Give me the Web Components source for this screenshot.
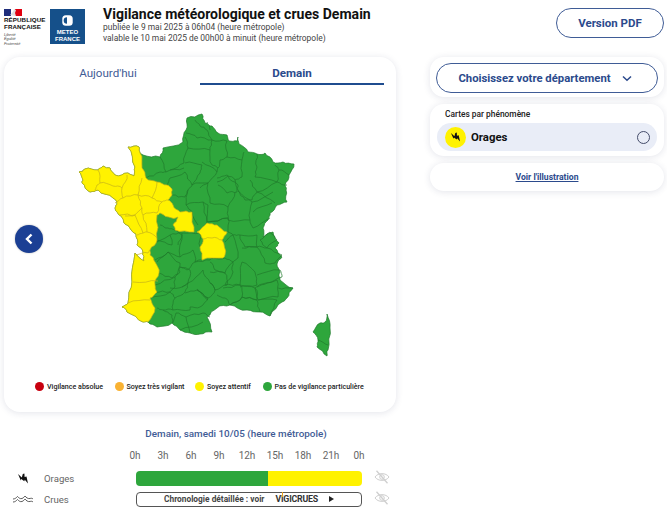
<!DOCTYPE html>
<html lang="fr">
<head>
<meta charset="utf-8">
<title>Vigilance</title>
<style>
  html, body { margin: 0; background: #fff; font-family: Roboto, "Liberation Sans", sans-serif; }
  body { width: 667px; height: 520px; overflow: hidden; }
</style>
</head>
<body>
<mf-page></mf-page>
<script>
const BLUE = '#2b4a8c';

// toutes les coordonnees sont en pixels de page, le viewBox du svg suit la page
const FRANCE = '202,114 205,123 212,126 218,133 227,135 229,141 237,141 238,137 239,144 248,152 257,154 265,153 273,162 283,162 294,164 289,175 285,185 286,190 287,202 277,205 270,213 268,220 263,228 263,237 273,232 275,238 279,243 275,248 282,257 277,264 280,272 280,280 293,288 287,298 282,302 270,316 260,312 247,310 230,305 217,308 207,317 212,332 200,334 190,333 180,330 172,323 157,327 148,322 143,322 127,312 122,307 128,303 132,282 135,253 144,261 143,252 137,245 136,234 125,224 121,216 115,208 117,203 113,198 98,190 90,192 82,183 83,180 79,172 85,169 98,170 103,166 110,168 115,175 128,173 134,176 135,167 128,147 139,147 140,153 143,155 160,157 163,148 183,142 186,130 187,118';
const CORSE = '327,314 330,328 328,350 327,356 317,347 318,340 313,332 320,323 325,322';
const YELLOW_WEST = '128,147 139,147 140,153 142,168 146,178 157,182 167,185 172,189 172,195 168,200 173,205 180,212 192,212 194,232 175,230 173,225 178,217 172,218 160,213 157,215 157,240 150,250 150,255 155,262 159,273 155,285 157,292 150,298 155,308 148,322 143,322 127,312 122,307 128,303 132,282 135,253 144,261 143,252 137,245 136,234 125,224 121,216 115,208 117,203 113,198 98,190 90,192 82,183 83,180 79,172 85,169 98,170 103,166 110,168 115,175 128,173 134,176 135,167';
const YELLOW_CENTER = '197,232 207,223 217,225 227,232 222,240 225,255 223,258 202,260 200,247 203,239';

const GREEN_LINES = [
  '195,120 200,126 207,130 212,140', '207,122 210,130', '186,133 197,138 212,140 227,141',
  '185,137 188,148 210,150 212,140', '210,150 212,165 218,168', '227,141 227,157 242,160 244,152',
  '227,157 220,160 217,172', '242,160 242,177 235,180 227,175 217,178', '257,154 257,167 255,177 277,182 279,170 275,165',
  '277,182 287,185', '279,170 289,175', '250,180 257,192 275,203', '257,192 277,182', '235,180 238,190 245,200 252,200 257,192',
  '217,182 228,176 238,185 237,192 227,193 218,185', '208,183 210,203 228,207 235,192', '228,207 228,220 250,220 252,202 238,191',
  '252,202 273,192', '250,220 253,228 270,218', '253,212 272,203', '208,205 207,222 228,218',
  '185,163 202,165 200,173 192,185 185,172', '202,162 217,172 208,183 200,188', '188,148 184,163 170,170', '160,157 166,172 184,168',
  '146,178 160,172 166,172', '167,185 170,178 185,172', '172,195 185,197 188,190 192,185 208,183', '188,190 186,205 203,202 208,205',
  '186,205 192,212', '203,202 207,222 200,230', '207,222 228,218 228,232', '192,212 198,225',
  '150,248 170,235 182,233 200,233 200,247', '182,233 180,257 168,252 155,260', '157,240 172,245 170,235', '175,230 182,235 178,245',
  '168,252 157,262', '168,252 180,263 180,272 172,278 159,273', '180,257 193,250 195,262 187,270 180,267', '195,262 210,260 213,258',
  '202,260 195,262', '213,258 225,258 233,262 225,273 215,270 210,262', '225,242 233,235 238,258 233,262', '240,235 257,235 257,247 245,247 240,235',
  '228,232 233,235 240,235', '260,240 270,232 277,240 267,248 260,240', '257,247 267,248 282,255 275,263 265,263 257,247',
  '242,248 257,247', '242,262 240,285 225,285 233,272 233,262', '242,262 255,272 257,285 240,285', '257,275 280,270 282,277 267,283 257,287',
  '255,288 277,280 278,297 258,300 255,288', '278,288 293,288', '258,300 277,300 270,316', '230,305 242,297 257,300 260,312',
  '240,287 255,288 257,300 242,297', '223,288 240,285 242,297 230,305 225,298 217,295', '210,272 225,273 227,285 215,290 210,283',
  '188,283 203,270 210,283 215,290 208,298 197,290', '175,277 180,267 190,270 188,283 182,287', '170,288 182,287 188,283 185,292 175,298',
  '155,285 175,277 175,287 170,292 155,292', '150,298 170,292 175,298 173,310 163,310 157,308', '163,310 172,315 173,323',
  '185,293 197,290 208,298 200,307 190,307', '173,310 190,310 190,307', '172,323 176,313 186,317 190,333', '186,317 203,313 210,317',
  '180,330 203,322', '197,289 208,300', '160,225 168,228 175,230', '318,340 328,345'
];
const YELLOW_LINES = [
  '98,170 100,183 97,185 95,190', '100,183 113,186 122,188', '127,175 122,188 123,198 115,203', '142,178 138,195 123,198',
  '157,182 152,198 138,195', '152,198 162,202 157,213 143,215', '138,195 142,208 135,215 120,215', '142,208 143,215 147,232 157,238',
  '125,216 135,215 143,233 137,235', '143,233 147,232', '162,202 168,200', '136,255 148,253 150,250', '133,282 158,281', '128,303 150,300',
  '203,239 212,238 222,240'
];

// les frontieres sont irregulieres : on casse chaque segment, toujours de la meme facon
// pour que deux departements voisins gardent la meme frontiere
function wiggle(points, closed) {
  const pts = points.trim().split(/\s+/).map(p => p.split(',').map(Number));
  if (closed) pts.push(pts[0]);
  const split = (a, b, depth) => {
    if (depth === 0) return [];
    const flip = a[0] > b[0] || (a[0] === b[0] && a[1] > b[1]);
    const p = flip ? b : a, q = flip ? a : b;
    const dx = q[0] - p[0], dy = q[1] - p[1];
    const len = Math.hypot(dx, dy) || 1;
    const n = Math.sin(p[0] * 12.9 + p[1] * 78.2 + q[0] * 37.7 + q[1] * 11.1) * 43758;
    // jamais plus de 1px a cote du trace d'origine
    const off = Math.max(-1, Math.min(1, (n - Math.floor(n) - .5) * .32 * len));
    const m = [(a[0] + b[0]) / 2 - dy / len * off, (a[1] + b[1]) / 2 + dx / len * off];
    return [...split(a, m, depth - 1), m, ...split(m, b, depth - 1)];
  };
  let out = [pts[0]];
  for (let i = 1; i < pts.length; i++) {
    out = out.concat(split(pts[i - 1], pts[i], 2), [pts[i]]);
  }
  return out.map(p => p[0].toFixed(1) + ',' + p[1].toFixed(1)).join(' ');
}

const BOLT = 'M1 1 4.800 4.600 5.800 1 7.400 .5 7.600 4 9.500 3.500 11 10.500 7.800 6.800 7.300 8.300 4.300 6 3.800 7.500z';

class MfLogos extends HTMLElement {
  constructor() {
    super();
    this.attachShadow({mode: 'open'}).innerHTML = `
    <style>
      :host { display: flex; gap: 6px; align-items: flex-start; width: 85px; }
      .rf { width: 40px; font-family: "Liberation Sans", sans-serif; }
      .rf svg { display: block; }
      .name { font-size: 6.2px; line-height: 7.4px; font-weight: bold; color: #111; margin-top: 0; letter-spacing: .1px; white-space: nowrap; }
      .motto { font-size: 3.8px; line-height: 4.500px; font-style: italic; color: #444; margin-top: 2px; }
      .mf { width: 35px; height: 35px; background: #15508a; color: #fff; display: flex; flex-direction: column; align-items: center; font-family: "Liberation Sans", sans-serif; font-size: 6px; line-height: 7px; font-weight: bold; }
      .mf svg { display: block; margin: 6px 0 3px; }
    </style>
    <div class="rf">
      <svg width="18" height="7" viewBox="0 0 18 7"><rect width="7" height="7" fill="#1f2d7b"/><rect x="7" width="4" height="7" fill="#fff"/><rect x="11" width="7" height="7" fill="#e1000f"/><path d="M6 6l3-3 1-3 2 1-1 3 1 3z" fill="#ddd"/></svg>
      <div class="name">RÉPUBLIQUE<br>FRANÇAISE</div>
      <div class="motto">Liberté<br>Égalité<br>Fraternité</div>
    </div>
    <div class="mf">
      <svg width="11" height="11" viewBox="0 0 11 11"><rect x=".3" y=".3" width="10.400" height="10.400" rx="3.500" fill="#fff"/><path d="M5 2.200a3.300 3.300 0 0 0 0 6.600z" fill="#15508a"/></svg>
      <span>METEO</span><span>FRANCE</span>
    </div>`;
  }
}

class MfHeader extends HTMLElement {
  constructor() {
    super();
    this.attachShadow({mode: 'open'}).innerHTML = `
    <style>
      :host { display: flex; height: 57px; box-sizing: border-box; padding: 9px 3px 0 4px; }
      .txt { margin: -2px 0 0 14px; flex: 1; }
      h1 { margin: 0; font-size: 14.05px; line-height: 14px; font-weight: 700; color: #111; white-space: nowrap; }
      p { margin: 0; font-size: 8.45px; line-height: 11px; color: #444; white-space: nowrap; }
      h1 + p { margin-top: 1px; }
      a { box-sizing: border-box; width: 108px; height: 30px; margin-top: -1px; border: 1px solid #3f5c96; border-radius: 15px; display: flex; align-items: center; justify-content: center; font-size: 11.5px; font-weight: 700; color: ${BLUE}; }
    </style>
    <mf-logos></mf-logos>
    <div class="txt">
      <h1>Vigilance météorologique et crues Demain</h1>
      <p>publiée le 9 mai 2025 à 06h04 (heure métropole)</p>
      <p>valable le 10 mai 2025 de 00h00 à minuit (heure métropole)</p>
    </div>
    <a>Version PDF</a>`;
  }
}

class MfTabs extends HTMLElement {
  constructor() {
    super();
    this.attachShadow({mode: 'open'}).innerHTML = `
    <style>
      :host { display: flex; height: 33px; box-sizing: border-box; padding: 0 12px; font-size: 11.6px; color: #3f5c96; }
      div { flex: 1; text-align: center; padding-top: 9px; height: 24px; }
      div + div { font-weight: 700; color: ${BLUE}; border-bottom: 2px solid #1f4c8f; height: 17px; }
    </style>
    <div>Aujourd'hui</div><div>Demain</div>`;
  }
}

class MfMap extends HTMLElement {
  constructor() {
    super();
    const lines = (list, color) => list.map(p => `<polyline points="${wiggle(p)}" fill="none" stroke="${color}"/>`).join('');
    const area = (p, fill, stroke) => `<polygon points="${wiggle(p, true)}" fill="${fill}" stroke="${stroke}"/>`;
    this.attachShadow({mode: 'open'}).innerHTML = `
    <style>
      :host { display: block; position: relative; height: 288px; }
      svg.map { display: block; }
      .prev { position: absolute; left: 11px; top: 135px; width: 28px; height: 28px; border-radius: 50%; background: #1b3f94; display: flex; align-items: center; justify-content: center; box-shadow: 0 0 2px rgba(0,0,0,.3); }
    </style>
    <svg class="map" width="392" height="288" viewBox="4 90 392 288">
      <g stroke-width=".7" stroke-linejoin="round">
        ${area(FRANCE, '#2ea63c', '#1f7a2b')}
        ${area(CORSE, '#2ea63c', '#1f7a2b')}
        ${lines(GREEN_LINES, '#1f7a2b')}
        ${area(YELLOW_WEST, '#fff200', '#c4b21a')}
        ${area(YELLOW_CENTER, '#fff200', '#c4b21a')}
        ${lines(YELLOW_LINES, '#c4b21a')}
      </g>
    </svg>
    <div class="prev">
      <svg width="10" height="12" viewBox="0 0 10 12"><path d="M7.500 1.500 3 6l4.500 4.500" fill="none" stroke="#fff" stroke-width="2.400"/></svg>
    </div>`;
  }
}

class MfLegend extends HTMLElement {
  constructor() {
    super();
    const items = [['#c8000f', 'Vigilance absolue', 79.5], ['#f9b233', 'Soyez très vigilant', 80.5], ['#fff200', 'Soyez attentif', 67.5], ['#2ea63c', 'Pas de vigilance particulière', 110]];
    this.attachShadow({mode: 'open'}).innerHTML = `
    <style>
      :host { display: flex; padding: 1px 0 0 31px; height: 24px; box-sizing: border-box; font-size: 7.1px; font-weight: 500; color: #222; }
      div { display: flex; align-items: center; height: 14px; gap: 3px; white-space: nowrap; }
      i { width: 9px; height: 9px; border-radius: 50%; flex: none; }
    </style>
    ${items.map(it => `<div style="width:${it[2]}px"><i style="background:${it[0]}"></i>${it[1]}</div>`).join('')}`;
  }
}

class MfTimeline extends HTMLElement {
  constructor() {
    super();
    const hours = ['0h', '3h', '6h', '9h', '12h', '15h', '18h', '21h', '0h'];
    const eye = `<svg width="16" height="14" viewBox="0 0 16 14" fill="none" stroke="#cfcfcf" stroke-width="1"><path d="M1 7c3-4.500 11-4.500 14 0-3 4.500-11 4.500-14 0z"/><circle cx="8" cy="7" r="2.300"/><path d="M2.500 .8 13.500 13.200" stroke-width="1.300"/></svg>`;
    this.attachShadow({mode: 'open'}).innerHTML = `
    <style>
      :host { display: block; font-size: 10px; color: #666; }
      h2 { margin: 0 0 0 4px; width: 464px; text-align: center; font-size: 9.9px; line-height: 14px; font-weight: 500; color: #3f5c96; }
      .hours { display: grid; grid-template-columns: repeat(9, 28px); margin: 9px 0 0 121px; line-height: 12px; text-align: center; }
      .row { display: grid; grid-template-columns: 44px 92px 226px 20px; align-items: center; height: 15px; margin-top: 6px; font-size: 9.6px; }
      .hours + .row { margin-top: 8px; }
      .row svg.ico { justify-self: center; margin-left: 2px; }
      .bar { height: 15px; border-radius: 4px; overflow: hidden; display: flex; }
      .bar b { display: block; background: #2ea63c; width: 132px; }
      .bar s { display: block; background: #fff200; flex: 1; }
      .btn { box-sizing: border-box; height: 15px; border: 1px solid #555; border-radius: 4px; display: flex; align-items: center; font-size: 8.35px; font-weight: 700; padding-left: 27px; white-space: nowrap; color: #444; }
      .btn em { font-style: normal; font-size: 8.8px; color: #333; margin-left: 11px; letter-spacing: -.2px; }
      .btn em span { position: relative; }
      .btn em span::after { content: ""; position: absolute; left: 1px; top: -2px; width: 1px; height: 5px; background: #e8a020; }
      .btn svg { margin-left: 11px; }
      .off { margin-left: 12px; }
    </style>
    <h2>Demain, samedi 10/05 (heure métropole)</h2>
    <div class="hours">${hours.map(h => `<span>${h}</span>`).join('')}</div>
    <div class="row">
      <svg class="ico" width="12" height="11" viewBox="0 0 12 11"><path d="${BOLT}" fill="#111"/></svg>
      <span>Orages</span>
      <div class="bar"><b></b><s></s></div>
      <span class="off">${eye}</span>
    </div>
    <div class="row">
      <svg class="ico" width="22" height="10" viewBox="0 0 22 10" fill="none" stroke="#333" stroke-width=".8"><path d="M1 5c2 0 3-1 4.500-2.500C7 4 8 5 10 4.500 11.500 4 12 3 13 2c1 1.500 3 3 5 2.500 1-.3 2-.5 3 .5"/><path d="M1 8c2 0 3-1 4.500-2.500C7 7 8 8 10 7.500c1.500-.5 2-1.500 3-2.500 1 1.500 3 3 5 2.500 1-.3 2-.5 3 .5"/></svg>
      <span>Crues</span>
      <div class="btn">Chronologie détaillée : voir<em>V<span>I</span>GICRUES</em><svg width="5" height="6" viewBox="0 0 5 6"><path d="M0 0 5 3 0 6z" fill="#222"/></svg></div>
      <span class="off">${eye}</span>
    </div>`;
  }
}

class MfCard extends HTMLElement {
  constructor() {
    super();
    this.attachShadow({mode: 'open'}).innerHTML = `
    <style>
      :host { display: block; background: #fff; border-radius: 14px; box-shadow: 0 1px 7px rgba(40,50,90,.13); }
    </style>
    <slot></slot>`;
  }
}

class MfSide extends HTMLElement {
  constructor() {
    super();
    this.attachShadow({mode: 'open'}).innerHTML = `
    <style>
      :host { display: flex; flex-direction: column; gap: 7px; width: 234px; }
      .dept { box-sizing: border-box; height: 40px; padding: 6px; }
      .dept div { box-sizing: border-box; height: 30px; padding-right: 4px; border: 1px solid #3f5c96; border-radius: 15px; display: flex; align-items: center; justify-content: center; gap: 11px; font-size: 11.3px; font-weight: 700; color: ${BLUE}; }
      .phen { height: 52px; padding: 5px 7px 0; box-sizing: border-box; }
      .phen h3 { margin: 0 0 0 8px; font-size: 8.4px; line-height: 11px; font-weight: 500; color: #222; }
      .opt { height: 28px; margin-top: 3px; border-radius: 14px; background: #e9edf7; display: flex; align-items: center; padding: 0 7px 0 8px; font-size: 11.4px; font-weight: 700; color: #111; }
      .sun { width: 21px; height: 21px; border-radius: 50%; background: #fff200; display: flex; align-items: center; justify-content: center; margin-right: 5px; }
      .radio { margin-left: auto; box-sizing: border-box; width: 13px; height: 13px; border: 1px solid #444c6a; border-radius: 50%; }
      .ill { display: block; height: 28px; line-height: 28px; text-align: center; font-size: 8.6px; font-weight: 700; color: ${BLUE}; }
      u { text-underline-offset: 1px; }
    </style>
    <mf-card class="dept"><div>Choisissez votre département
      <svg width="10" height="7" viewBox="0 0 10 7"><path d="M1 1.500 5 5.300 9 1.500" fill="none" stroke="${BLUE}" stroke-width="1.500"/></svg></div></mf-card>
    <mf-card class="phen">
      <h3>Cartes par phénomène</h3>
      <div class="opt"><span class="sun"><svg width="11" height="10" viewBox="0 0 12 11"><path d="${BOLT}" fill="#111"/></svg></span>Orages<span class="radio"></span></div>
    </mf-card>
    <mf-card class="ill"><u>Voir l'illustration</u></mf-card>`;
  }
}

class MfPage extends HTMLElement {
  constructor() {
    super();
    this.attachShadow({mode: 'open'}).innerHTML = `
    <style>
      :host { display: block; width: 667px; }
      .cols { display: grid; grid-template-columns: 392px 234px; column-gap: 34px; padding-left: 4px; align-items: start; }
      .main { height: 355px; border-radius: 16px; }
      mf-timeline { margin-top: 15px; }
    </style>
    <mf-header></mf-header>
    <div class="cols">
      <mf-card class="main">
        <mf-tabs></mf-tabs>
        <mf-map></mf-map>
        <mf-legend></mf-legend>
      </mf-card>
      <mf-side></mf-side>
    </div>
    <mf-timeline></mf-timeline>`;
  }
}

customElements.define('mf-logos', MfLogos);
customElements.define('mf-header', MfHeader);
customElements.define('mf-tabs', MfTabs);
customElements.define('mf-map', MfMap);
customElements.define('mf-legend', MfLegend);
customElements.define('mf-timeline', MfTimeline);
customElements.define('mf-card', MfCard);
customElements.define('mf-side', MfSide);
customElements.define('mf-page', MfPage);
</script>
</body>
</html>
